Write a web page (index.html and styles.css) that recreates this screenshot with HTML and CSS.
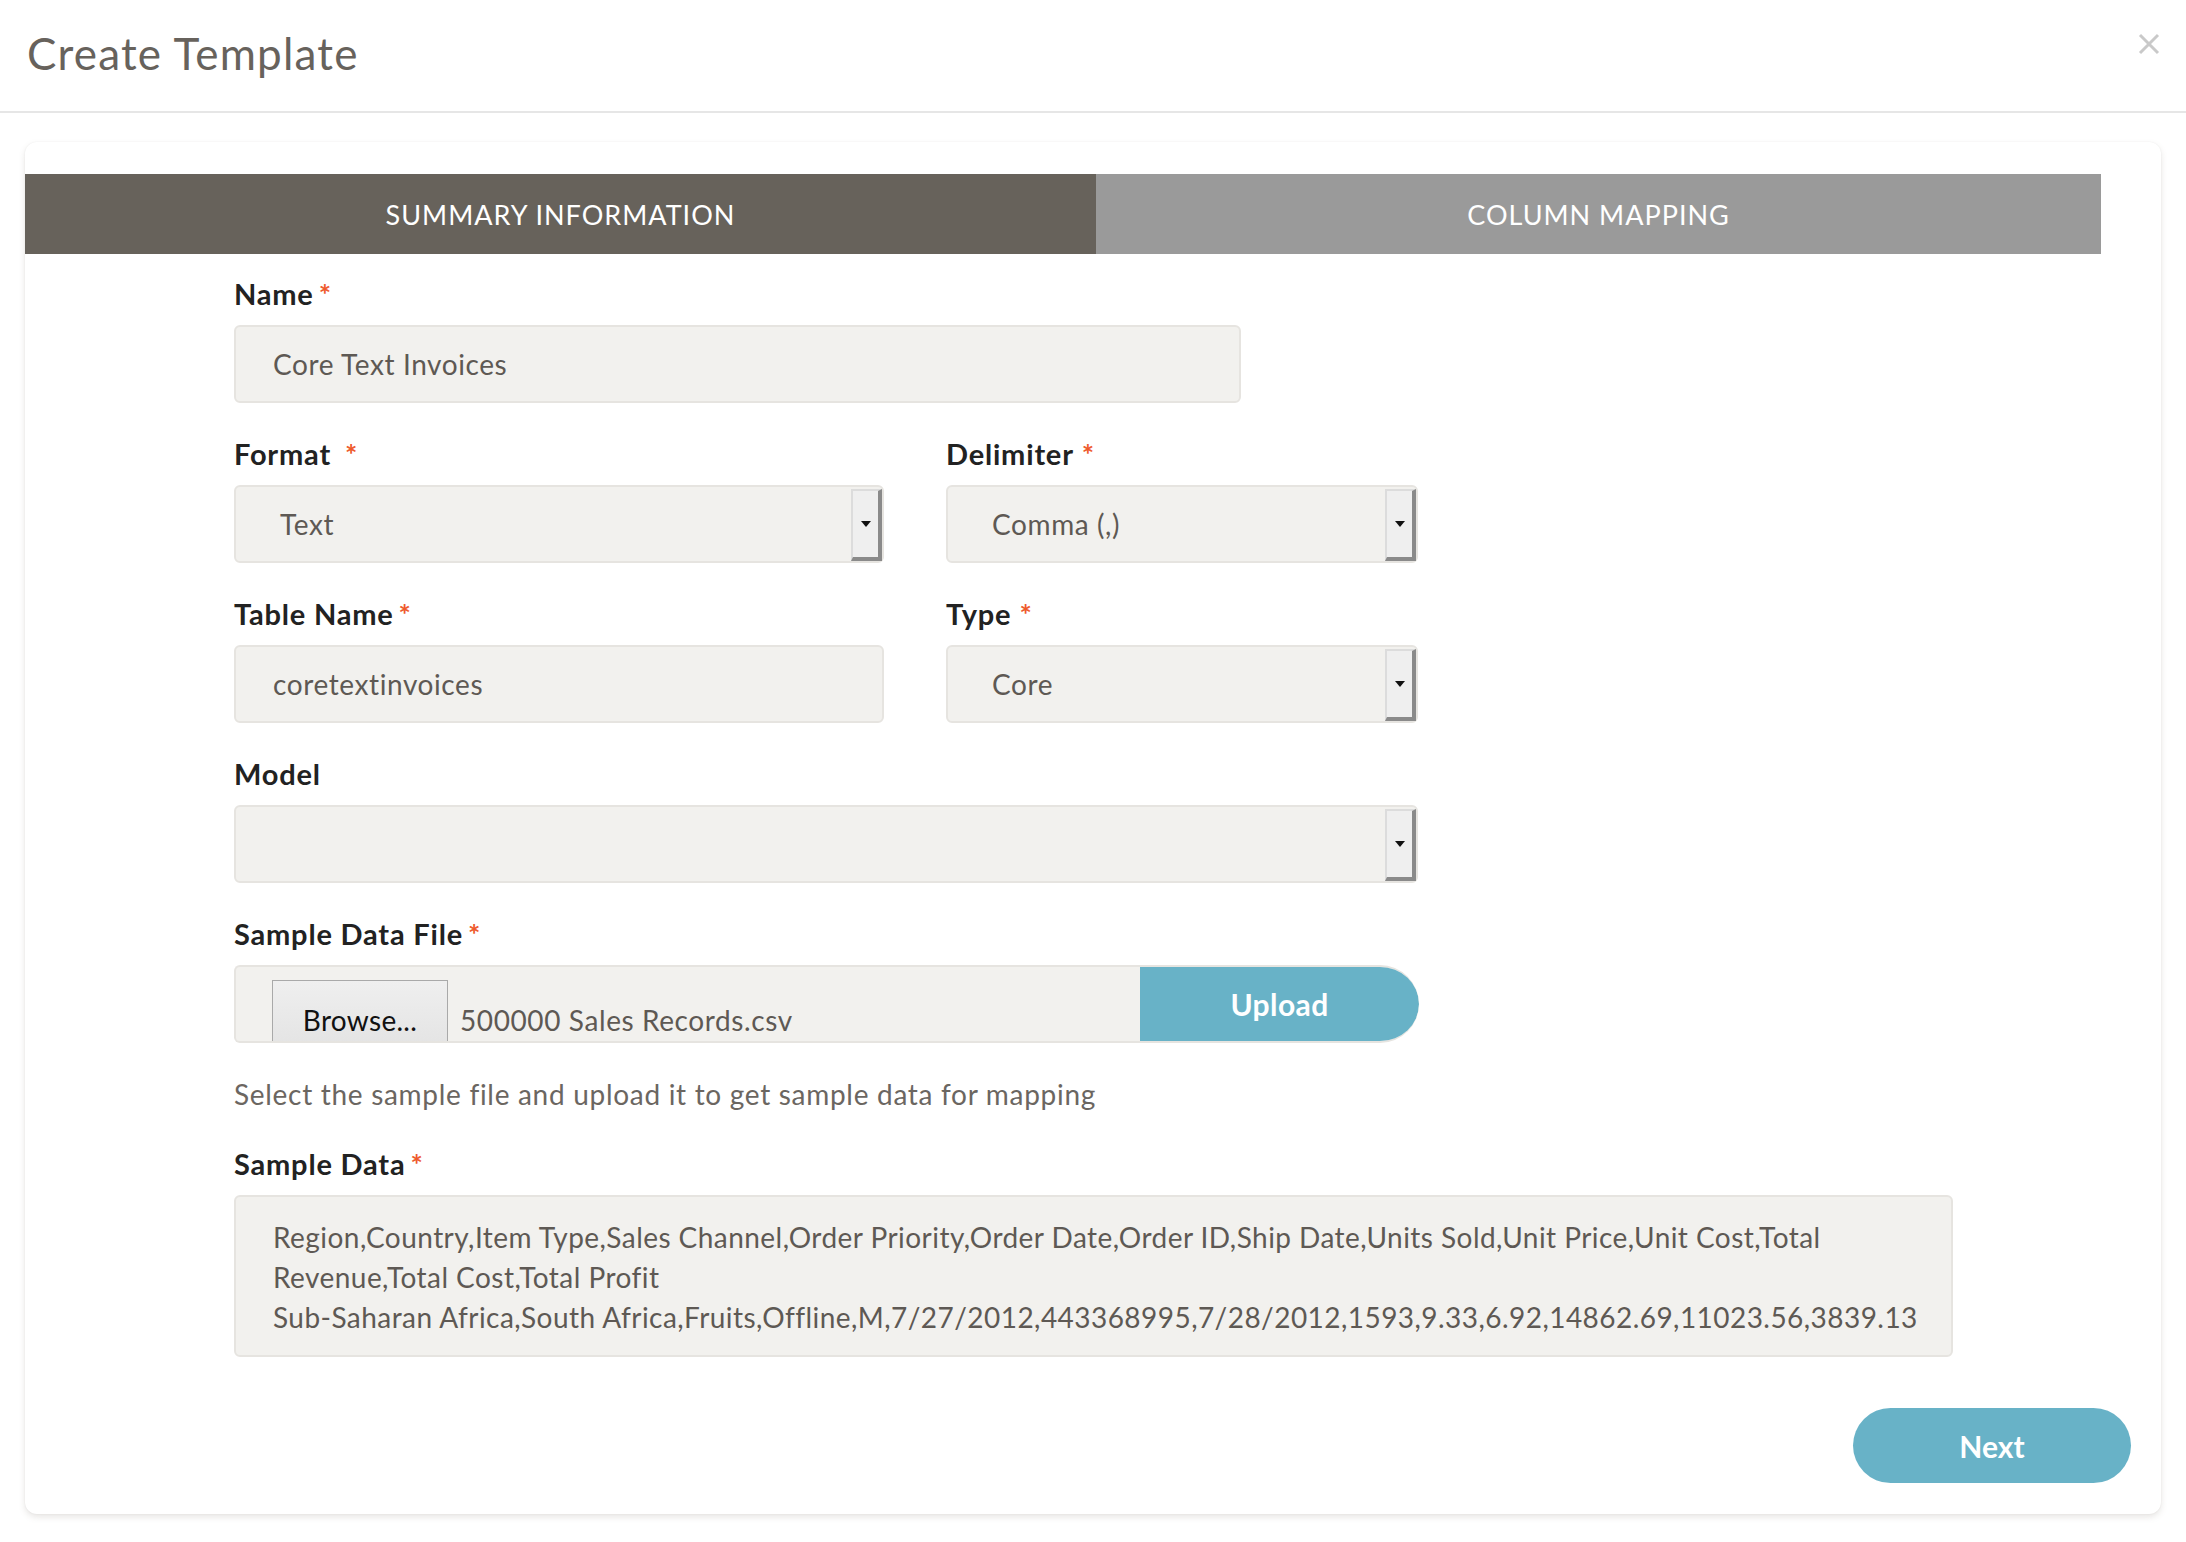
FILE: index.html
```html
<!DOCTYPE html>
<html lang="en">
<head>
<meta charset="utf-8">
<title>Create Template</title>
<link rel="stylesheet" href="styles.css">
</head>
<body>
<header class="modal-header">
  <h1 class="modal-title">Create Template</h1>
  <button class="close" aria-label="Close">
    <svg width="22" height="22" viewBox="0 0 22 22"><path d="M2 2 L20 20 M20 2 L2 20" stroke="#c9c9c9" stroke-width="3" fill="none"/></svg>
  </button>
</header>
<main class="modal-body">
  <section class="card">
    <nav class="tabs">
      <div class="tab active">SUMMARY INFORMATION</div>
      <div class="tab">COLUMN MAPPING</div>
    </nav>
    <form class="form">
      <div class="field">
        <label class="label">Name<span class="req">*</span></label>
        <div class="input name-input">Core Text Invoices</div>
      </div>
      <div class="row">
        <div class="field">
          <label class="label">Format<span class="req wide">*</span></label>
          <div class="select"><span class="select-value">Text</span><span class="select-btn"><i class="tri"></i></span></div>
        </div>
        <div class="field">
          <label class="label">Delimiter<span class="req mid">*</span></label>
          <div class="select"><span class="select-value">Comma (,)</span><span class="select-btn"><i class="tri"></i></span></div>
        </div>
      </div>
      <div class="row">
        <div class="field">
          <label class="label">Table Name<span class="req">*</span></label>
          <div class="input">coretextinvoices</div>
        </div>
        <div class="field">
          <label class="label">Type<span class="req mid">*</span></label>
          <div class="select"><span class="select-value">Core</span><span class="select-btn"><i class="tri"></i></span></div>
        </div>
      </div>
      <div class="field">
        <label class="label">Model</label>
        <div class="select model-select"><span class="select-value"></span><span class="select-btn"><i class="tri"></i></span></div>
      </div>
      <div class="field">
        <label class="label">Sample Data File<span class="req">*</span></label>
        <div class="file-row">
          <div class="file-left">
            <span class="browse">Browse...</span>
            <span class="file-name">500000 Sales Records.csv</span>
          </div>
          <button type="button" class="upload">Upload</button>
        </div>
      </div>
      <p class="help">Select the sample file and upload it to get sample data for mapping</p>
      <div class="field">
        <label class="label">Sample Data<span class="req">*</span></label>
        <div class="textarea">
          <span class="line">Region,Country,Item Type,Sales Channel,Order Priority,Order Date,Order ID,Ship Date,Units Sold,Unit Price,Unit Cost,Total</span>
          <span class="line">Revenue,Total Cost,Total Profit</span>
          <span class="line">Sub-Saharan Africa,South Africa,Fruits,Offline,M,7/27/2012,443368995,7/28/2012,1593,9.33,6.92,14862.69,11023.56,3839.13</span>
        </div>
      </div>
    </form>
    <div class="actions">
      <button type="button" class="next">Next</button>
    </div>
  </section>
</main>
</body>
</html>
```

FILE: styles.css
```css
* { box-sizing: border-box; }
html, body { margin: 0; padding: 0; background: #ffffff; }
body {
  font-family: "Lato", "Open Sans", sans-serif;
  color: #222222;
}

.modal-header {
  height: 113px;
  border-bottom: 2px solid #e6e6e6;
  display: flex;
  align-items: center;
  justify-content: space-between;
  padding: 0 26px 0 27px;
}
.modal-title {
  margin: 0 0 6px 0;
  font-size: 44px;
  font-weight: 400;
  color: #67625c;
  letter-spacing: 1.2px;
}
.close {
  border: 0;
  background: none;
  padding: 0;
  margin-bottom: 24px;
  display: flex;
  cursor: pointer;
}

.modal-body {
  padding: 29px 25px 28px 25px;
}
.card {
  width: 2136px;
  background: #ffffff;
  border-radius: 12px;
  box-shadow: 0 3px 6px rgba(120, 110, 100, 0.18), 0 0 2px rgba(0, 0, 0, 0.06);
  padding-top: 32px;
}

.tabs {
  display: flex;
  width: 2076px;
  height: 80px;
}
.tab {
  display: flex;
  align-items: center;
  justify-content: center;
  color: #ffffff;
  font-size: 27px;
  letter-spacing: 1px;
  background: #9a9a9a;
  flex: 1;
}
.tab.active {
  flex: 0 0 1071px;
  background: #67625b;
}

.form {
  padding: 23px 0 0 209px;
  display: flex;
  flex-direction: column;
  gap: 34px;
}
.row {
  display: grid;
  grid-template-columns: 650px 472px;
  column-gap: 62px;
}
.field {
  display: flex;
  flex-direction: column;
}
.label {
  font-size: 29px;
  font-weight: 700;
  line-height: 34px;
  letter-spacing: 0.8px;
  color: #222222;
  margin-bottom: 14px;
}
.req {
  color: #ee5a2c;
  margin-left: 5px;
  font-weight: 700;
}
.req.wide { margin-left: 14px; }
.req.mid { margin-left: 8px; }

.input, .select, .file-row, .textarea {
  background: #f2f1ee;
  border: 2px solid #e6e4e0;
  border-radius: 6px;
  font-size: 28px;
  letter-spacing: 0.6px;
  color: #5e5954;
}
.input {
  height: 78px;
  display: flex;
  align-items: center;
  padding-left: 37px;
}
.name-input { width: 1007px; }

.select {
  height: 78px;
  display: flex;
  align-items: center;
  justify-content: space-between;
  padding-left: 44px;
}
.model-select { width: 1184px; }
.select-btn {
  align-self: stretch;
  width: 31px;
  margin: 2px 0 0 0;
  background: #efefef;
  border-top: 2px solid #dcdcdc;
  border-left: 2px solid #dcdcdc;
  border-right: 4px solid #8a8a8a;
  border-bottom: 4px solid #8a8a8a;
  display: flex;
  align-items: center;
  justify-content: center;
}
.tri {
  width: 0;
  height: 0;
  border-left: 5px solid transparent;
  border-right: 5px solid transparent;
  border-top: 6px solid #111111;
}

.file-row {
  width: 1185px;
  height: 78px;
  display: flex;
  justify-content: space-between;
  overflow: hidden;
  border-radius: 6px 40px 40px 6px;
  border-right: 0;
}
.file-left {
  display: flex;
  align-items: flex-start;
  padding: 13px 0 0 36px;
}
.browse {
  width: 176px;
  height: 72px;
  padding-top: 8px;
  display: flex;
  align-items: center;
  justify-content: center;
  border: 1px solid #a9a9a9;
  background: linear-gradient(#efefef, #e3e3e3);
  color: #111111;
  font-size: 28px;
  letter-spacing: 0.3px;
}
.file-name {
  height: 72px;
  padding: 8px 0 0 12px;
  display: flex;
  align-items: center;
}
.upload {
  width: 279px;
  margin: -2px 0;
  border: 0;
  border-radius: 0 40px 40px 0;
  background: #68b2c7;
  color: #ffffff;
  font-family: "Lato", sans-serif;
  font-weight: 700;
  font-size: 30px;
  letter-spacing: 0.4px;
  cursor: pointer;
}

.help {
  margin: 0 0 2px 0;
  font-size: 28px;
  line-height: 34px;
  letter-spacing: 0.7px;
  color: #6b6661;
}

.textarea {
  width: 1719px;
  padding: 20px 37px 18px;
  line-height: 40px;
  letter-spacing: 0.45px;
  display: flex;
  flex-direction: column;
}
.line { white-space: nowrap; }

.actions {
  display: flex;
  justify-content: flex-end;
  padding: 51px 30px 31px 0;
}
.next {
  width: 278px;
  height: 75px;
  border: 0;
  border-radius: 38px;
  background: #68b2c7;
  color: #ffffff;
  font-family: "Lato", sans-serif;
  font-weight: 700;
  font-size: 30px;
  cursor: pointer;
}
```
